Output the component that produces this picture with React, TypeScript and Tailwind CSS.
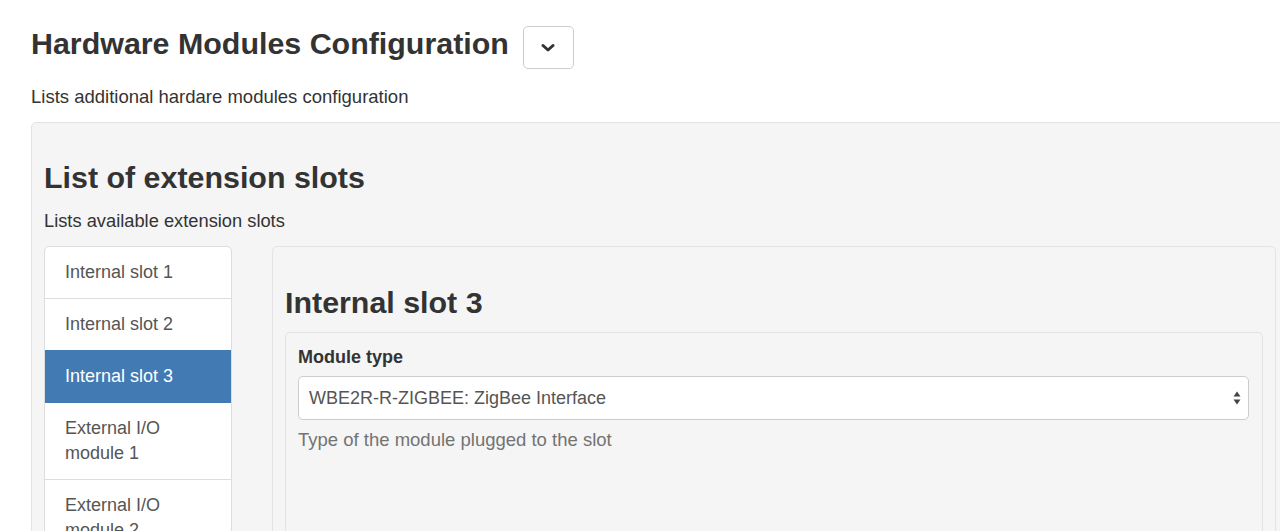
const slots = [
  "Internal slot 1",
  "Internal slot 2",
  "Internal slot 3",
  "External I/O module 1",
  "External I/O module 2",
];

const App = () => {
  const active = 2;
  return (
    <div className="h-[531px] w-[1280px] overflow-hidden bg-white font-['Liberation_Sans',Arial,sans-serif] text-[18px] leading-[25px] text-[#333]">
      <div className="pl-[31px] pt-[26px]">
        {/* Page header with collapse toggle */}
        <div className="flex items-start gap-[14px]">
          <h1 className="mt-[1px] text-[30.4px] font-bold leading-[33px]">
            Hardware Modules Configuration
          </h1>
          <button className="flex h-[43px] w-[51px] items-center justify-center rounded-[5px] border border-[#ccc] bg-white">
            <svg width="14" height="10" viewBox="0 0 14 10">
              <path
                d="M2 2.5 L7 7 L12 2.5"
                fill="none"
                stroke="#333"
                strokeWidth="3"
                strokeLinecap="round"
                strokeLinejoin="round"
              />
            </svg>
          </button>
        </div>
        <p className="mt-[15px] text-[18.5px]">Lists additional hardare modules configuration</p>

        {/* Outer well */}
        <div className="mt-[13px] w-[1270px] rounded-[5px] border border-[#e3e3e3] bg-[#f5f5f5] px-[12px] pt-[38px] pb-10">
          <h2 className="text-[30.4px] font-bold leading-[33px]">List of extension slots</h2>
          <p className="mt-[14px] text-[18.3px]">Lists available extension slots</p>

          <div className="mt-[13px] flex items-start gap-10">
            {/* Slot list */}
            <div className="w-[188px] shrink-0 rounded-[5px] border border-[#ddd] bg-white">
              {slots.map((slot, index) => (
                <div
                  key={index}
                  className={
                    index === active
                      ? "-mt-[1px] border-b border-[#427ab4] bg-[#427ab4] px-[20px] pt-[14px] pb-[13px] text-white"
                      : "border-b border-[#ddd] px-[20px] py-[13px] text-[#555]"
                  }
                >
                  {slot}
                </div>
              ))}
            </div>

            {/* Selected slot panel */}
            <div className="w-[1004px] shrink-0 rounded-[5px] border border-[#e3e3e3] bg-[#f5f5f5] px-[12px] pt-[39px] pb-10">
              <h2 className="text-[30.4px] font-bold leading-[33px]">Internal slot 3</h2>
              <div className="mt-[13px] rounded-[5px] border border-[#e3e3e3] bg-[#f5f5f5] pl-[12px] pr-[13px] pt-[12px] pb-[120px]">
                <label className="block font-bold">Module type</label>
                <div className="relative mt-[6px] flex h-[44px] items-center rounded-[5px] border border-[#ccc] bg-white pl-[10px] text-[#555]">
                  WBE2R-R-ZIGBEE: ZigBee Interface
                  <svg
                    className="absolute right-[7px] top-[14px]"
                    width="8"
                    height="14"
                    viewBox="0 0 8 14"
                  >
                    <path d="M4 0.5 L7.5 5.5 L0.5 5.5 Z" fill="#444" />
                    <path d="M4 13.5 L7.5 8.5 L0.5 8.5 Z" fill="#444" />
                  </svg>
                </div>
                <p className="mt-[7px] text-[18.5px] text-[#737373]">
                  Type of the module plugged to the slot
                </p>
              </div>
            </div>
          </div>
        </div>
      </div>
    </div>
  );
};

export default App;
